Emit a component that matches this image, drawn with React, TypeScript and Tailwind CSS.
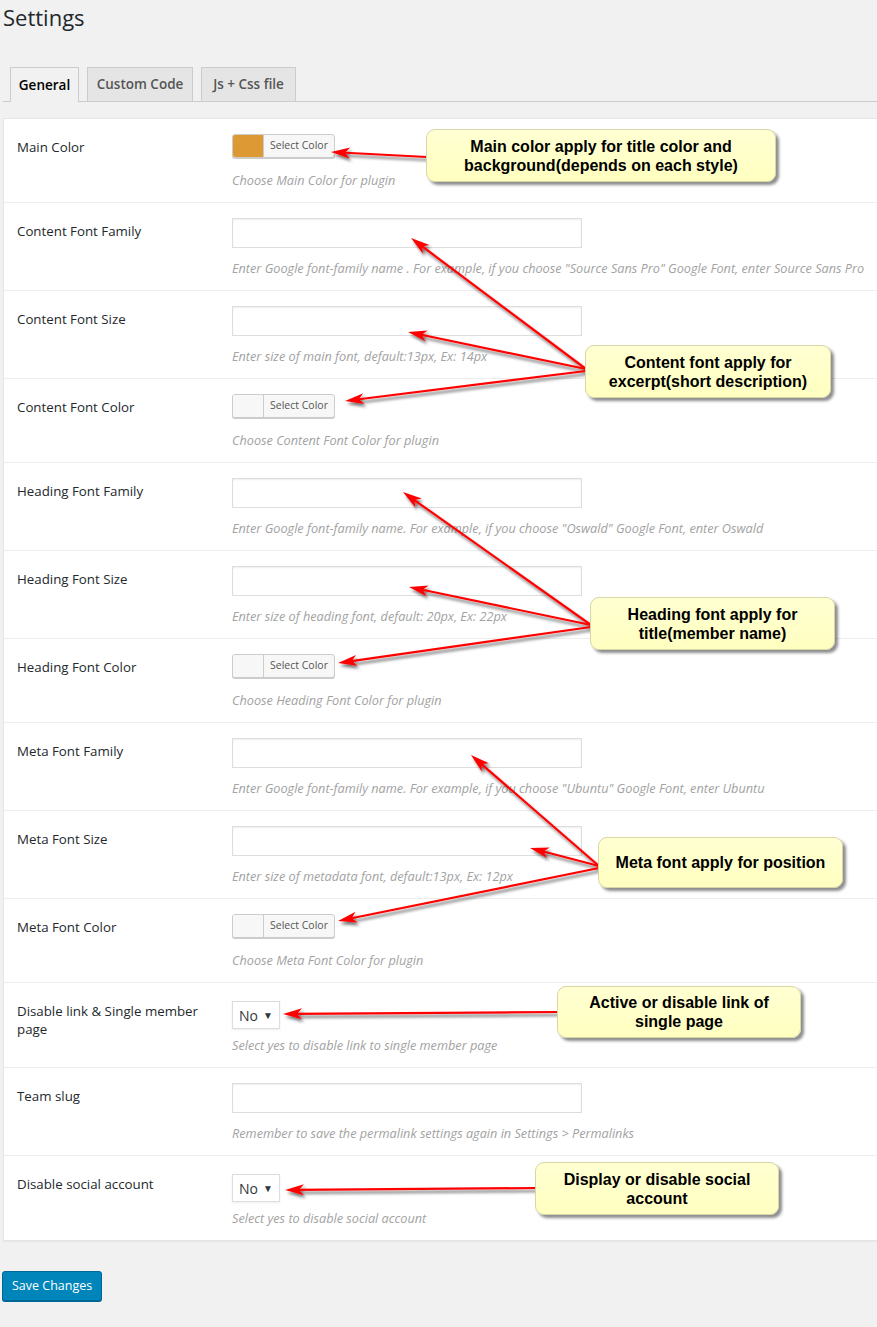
import React from 'react';

type Field = 'color' | 'text' | 'select';

interface Row {
  label: string;
  field: Field;
  desc: string;
  swatch?: string;
}

const rows: Row[] = [
  { label: 'Main Color', field: 'color', swatch: '#dd9933', desc: 'Choose Main Color for plugin' },
  {
    label: 'Content Font Family',
    field: 'text',
    desc: 'Enter Google font-family name . For example, if you choose "Source Sans Pro" Google Font, enter Source Sans Pro',
  },
  { label: 'Content Font Size', field: 'text', desc: 'Enter size of main font, default:13px, Ex: 14px' },
  { label: 'Content Font Color', field: 'color', desc: 'Choose Content Font Color for plugin' },
  {
    label: 'Heading Font Family',
    field: 'text',
    desc: 'Enter Google font-family name. For example, if you choose "Oswald" Google Font, enter Oswald',
  },
  { label: 'Heading Font Size', field: 'text', desc: 'Enter size of heading font, default: 20px, Ex: 22px' },
  { label: 'Heading Font Color', field: 'color', desc: 'Choose Heading Font Color for plugin' },
  {
    label: 'Meta Font Family',
    field: 'text',
    desc: 'Enter Google font-family name. For example, if you choose "Ubuntu" Google Font, enter Ubuntu',
  },
  { label: 'Meta Font Size', field: 'text', desc: 'Enter size of metadata font, default:13px, Ex: 12px' },
  { label: 'Meta Font Color', field: 'color', desc: 'Choose Meta Font Color for plugin' },
  { label: 'Disable link & Single member page', field: 'select', desc: 'Select yes to disable link to single member page' },
  { label: 'Team slug', field: 'text', desc: 'Remember to save the permalink settings again in Settings > Permalinks' },
  { label: 'Disable social account', field: 'select', desc: 'Select yes to disable social account' },
];

// arrows: [fromX, fromY, toX, toY]
const arrows: [number, number, number, number][] = [
  [427, 157, 331, 152],
  [586, 369, 411, 238],
  [586, 369, 408, 332],
  [586, 371, 345, 401],
  [591, 625, 403, 492],
  [591, 625, 409, 587],
  [591, 627, 338, 663],
  [599, 866, 471, 755],
  [599, 866, 530, 848],
  [599, 868, 338, 921],
  [558, 1012, 283, 1014],
  [536, 1188, 285, 1190],
];

const callouts = [
  { left: 426, top: 129, w: 350, h: 53, text: ['Main color apply for title color and', 'background(depends on each style)'] },
  { left: 585, top: 345, w: 246, h: 53, text: ['Content font apply for', 'excerpt(short description)'] },
  { left: 590, top: 597, w: 245, h: 53, text: ['Heading font apply for', 'title(member name)'] },
  { left: 598, top: 837, w: 245, h: 51, text: ['Meta font apply for position'] },
  { left: 557, top: 986, w: 244, h: 52, text: ['Active or disable link of', 'single page'] },
  { left: 535, top: 1162, w: 244, h: 53, text: ['Display or disable social', 'account'] },
];

function Arrow({ a }: { a: [number, number, number, number] }) {
  const [x1, y1, x2, y2] = a;
  const len = Math.hypot(x2 - x1, y2 - y1);
  const ux = (x2 - x1) / len;
  const uy = (y2 - y1) / len;
  const hl = 19;
  const hw = 5.5;
  const bx = x2 - ux * hl;
  const by = y2 - uy * hl;
  const pts = `${x2},${y2} ${bx - uy * hw},${by + ux * hw} ${x2 - ux * (hl - 5)},${y2 - uy * (hl - 5)} ${bx + uy * hw},${by - ux * hw}`;
  return (
    <g>
      <line x1={x1} y1={y1} x2={x2 - ux * 10} y2={y2 - uy * 10} stroke="#ff0000" strokeWidth={2.2} />
      <polygon points={pts} fill="#ff0000" />
    </g>
  );
}

function ColorButton({ swatch }: { swatch?: string }) {
  return (
    <div className="flex h-[24px] w-[103px] overflow-hidden rounded-[3px] border border-[#cccccc] bg-[#f7f7f7] shadow-[0_1px_0_#cccccc]">
      <div className="w-[31px] border-r border-[#cccccc]" style={{ backgroundColor: swatch ?? '#f7f7f7' }} />
      <div className="flex flex-1 items-center justify-center text-[10.5px] text-[#555555]">Select Color</div>
    </div>
  );
}

export default function App() {
  return (
    <div className="relative min-h-[1327px] w-[877px] overflow-hidden bg-[#f1f1f1] font-['Open_Sans','Noto_Sans',sans-serif] text-[#23282d]">
      <h1 className="pl-[3px] pt-[3px] text-[22px] leading-[29px] font-normal text-[#23282d]">Settings</h1>

      {/* Tabs */}
      <div className="ml-[3px] mt-[35px] flex gap-[8px] border-b border-[#cccccc] pl-[7px]">
        <div className="-mb-px flex h-[35px] w-[69px] items-center justify-center border border-b-0 border-[#cccccc] bg-[#f1f1f1] text-[13.5px] font-semibold text-black">
          General
        </div>
        <div className="flex h-[34px] w-[106px] items-center justify-center border border-b-0 border-[#cccccc] bg-[#e5e5e5] text-[13.5px] font-semibold text-[#555555]">
          Custom Code
        </div>
        <div className="flex h-[34px] w-[95px] items-center justify-center border border-b-0 border-[#cccccc] bg-[#e5e5e5] text-[13.5px] font-semibold text-[#555555]">
          Js + Css file
        </div>
      </div>

      {/* Panel */}
      <div className="ml-[3px] mt-[16px] border border-r-0 border-[#e5e5e5] bg-white shadow-[0_1px_1px_rgba(0,0,0,0.04)]">
        {rows.map((r, i) => (
          <div key={r.label} className={`flex pl-[13px] ${i > 0 ? 'border-t border-[#eeeeee]' : ''}`}>
            <div className="w-[215px] shrink-0 pr-[20px] pt-[19px] text-[13.3px] leading-[18px] text-[#23282d]">{r.label}</div>
            <div className="flex-1 pb-[13px] pt-[15px]">
              {r.field === 'color' && <ColorButton swatch={r.swatch} />}
              {r.field === 'text' && (
                <div className="h-[30px] w-[350px] border border-[#dddddd] bg-white shadow-[inset_0_1px_2px_rgba(0,0,0,0.07)]" />
              )}
              {r.field === 'select' && (
                <div className="mt-[3px] flex h-[28px] w-[48px] items-center justify-between border border-[#dddddd] bg-white pl-[6px] pr-[6px] shadow-[0_1px_2px_rgba(0,0,0,0.07)]">
                  <span className="text-[14px] text-[#32373c]">No</span>
                  <span className="text-[10px] text-[#32373c]">▼</span>
                </div>
              )}
              <p
                className={`whitespace-nowrap text-[12.7px] italic leading-[18px] text-[#a2a2a2] ${
                  r.field === 'color' ? 'mt-[13px]' : r.field === 'select' ? 'mt-[7px]' : 'mt-[11px]'
                }`}
              >
                {r.desc}
              </p>
            </div>
          </div>
        ))}
      </div>

      <button className="ml-[2px] mt-[30px] h-[30px] rounded-[3px] border border-[#006799] bg-[#0085ba] px-[9px] text-[12.5px] text-white shadow-[0_1px_0_#006799]">
        Save Changes
      </button>

      {/* Annotation overlay */}
      <svg className="pointer-events-none absolute left-0 top-0" width={877} height={1327}>
        <defs>
          <filter id="sh" x="-10%" y="-10%" width="130%" height="130%">
            <feDropShadow dx="2" dy="3" stdDeviation="1.6" floodColor="#000" floodOpacity="0.55" />
          </filter>
        </defs>
        <g filter="url(#sh)">
          {arrows.map((a, i) => (
            <Arrow key={i} a={a} />
          ))}
        </g>
      </svg>

      {callouts.map((c) => (
        <div
          key={c.text[0]}
          className="absolute flex flex-col items-center justify-center rounded-[9px] border border-[#d6d6a6] bg-gradient-to-b from-[#ffffd2] to-[#ffffc0] font-['Liberation_Sans',Arial,sans-serif] text-[16px] leading-[19px] font-bold text-black shadow-[3px_3px_3px_rgba(0,0,0,0.45)]"
          style={{ left: c.left, top: c.top, width: c.w, height: c.h }}
        >
          {c.text.map((t) => (
            <span key={t} className="whitespace-nowrap">
              {t}
            </span>
          ))}
        </div>
      ))}
    </div>
  );
}
